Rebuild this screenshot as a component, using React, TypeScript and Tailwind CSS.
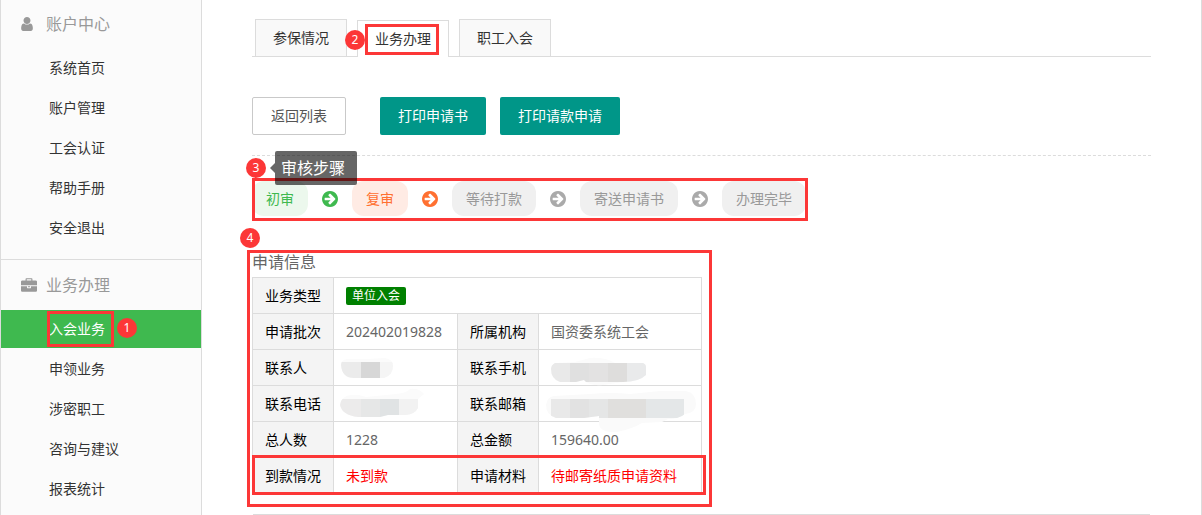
import React from 'react';
import clsx from 'clsx';

function UserIcon() {
  return (
    <svg viewBox="0 128 1280 1536" className="w-3 h-[14px]" fill="currentColor" aria-hidden="true">
      <path d="M1280 1399q0 109-62.5 187t-150.5 78h-854q-88 0-150.5-78t-62.5-187q0-85 8.5-160.5t31.5-152 58.5-131 94-89 134.5-34.5q131 128 313 128t313-128q76 0 134.5 34.5t94 89 58.5 131 31.5 152 8.5 160.5zm-256-887q0 159-112.5 271.5t-271.5 112.5-271.5-112.5-112.5-271.5 112.5-271.5 271.5-112.5 271.5 112.5 112.5 271.5z" />
    </svg>
  );
}

function BriefcaseIcon() {
  return (
    <svg viewBox="0 0 1792 1536" className="w-4 h-[14px]" fill="currentColor" aria-hidden="true">
      <path d="M640 256h512v-128h-512v128zm1152 640v480q0 66-47 113t-113 47h-1472q-66 0-113-47t-47-113v-480h672v160q0 26 19 45t45 19h320q26 0 45-19t19-45v-160h672zm-768 0v128h-256v-128h256zm768-480v384h-1792v-384q0-66 47-113t113-47h352v-160q0-40 28-68t68-28h576q40 0 68 28t28 68v160h352q66 0 113 47t47 113z" />
    </svg>
  );
}

function ArrowCircle({ className }: { className: string }) {
  return (
    <svg viewBox="128 128 1536 1536" className={clsx('w-4 h-4 shrink-0', className)} fill="currentColor" aria-hidden="true">
      <path d="M1413 896q0-27-18-45l-91-91-362-362q-18-18-45-18t-45 18l-91 91q-18 18-18 45t18 45l189 189h-502q-26 0-45 19t-19 45v128q0 26 19 45t45 19h502l-189 189q-19 19-19 45t19 45l91 91q18 18 45 18t45-18l362-362 91-91q18-18 18-45zm251 0q0 209-103 385.5t-279.5 279.5-385.5 103-385.5-103-279.5-279.5-103-385.5 103-385.5 279.5-279.5 385.5-103 385.5 103 279.5 279.5 103 385.5z" />
    </svg>
  );
}

// red outline drawn over a region of the page
function Outline({ className }: { className: string }) {
  return <span className={clsx('absolute border-3 border-[#fc3737] pointer-events-none', className)} />;
}

function Pin({ n, className }: { n: number; className: string }) {
  return (
    <span
      className={clsx(
        'absolute z-10 w-5 h-5 rounded-full bg-[#fc3737] text-white text-xs leading-5 text-center',
        className
      )}
    >
      {n}
    </span>
  );
}

const menus = [
  {
    title: '账户中心',
    icon: <UserIcon />,
    items: ['系统首页', '账户管理', '工会认证', '帮助手册', '安全退出'],
  },
  {
    title: '业务办理',
    icon: <BriefcaseIcon />,
    items: ['入会业务', '申领业务', '涉密职工', '咨询与建议', '报表统计'],
  },
];

function Sidebar() {
  return (
    <nav className="w-[202px] shrink-0 bg-[#fbfbfb] border-x border-[#dcdcdc]">
      {menus.map((menu, i) => (
        <section key={menu.title} className={i === 0 ? '-mt-px pb-2.5' : 'border-t border-[#dcdcdc]'}>
          <h2 className="flex items-center h-[50px] pl-5 text-base text-[#999]">
            <span className="w-[25px]">{menu.icon}</span>
            {menu.title}
          </h2>
          <ul>
            {menu.items.map((item) => {
              const active = item === '入会业务';
              return (
                <li key={item} className="relative mb-0.5">
                  <a
                    href="#"
                    className={clsx(
                      'block h-[38px] pl-12 leading-[38px]',
                      active ? 'bg-[#3fb94f] text-white' : 'text-[#333]'
                    )}
                  >
                    {item}
                  </a>
                  {active && (
                    <>
                      <Outline className="left-[46px] top-px w-[67px] h-9" />
                      <Pin n={1} className="left-[116px] top-2" />
                    </>
                  )}
                </li>
              );
            })}
          </ul>
        </section>
      ))}
    </nav>
  );
}

function Tabs() {
  return (
    <div className="flex items-end gap-2.5 pl-[3px] border-b border-[#dcdcdc]">
      {['参保情况', '业务办理', '职工入会'].map((tab) => {
        const active = tab === '业务办理';
        return (
          <div key={tab} className={clsx('relative', active && '-mb-px')}>
            <button
              className={clsx(
                'block h-[37px] px-[17px] border border-b-0 border-[#dcdcdc] text-[#333]',
                active ? 'bg-white' : 'bg-[#f9f9f9]'
              )}
            >
              {tab}
            </button>
            {active && (
              <>
                <Outline className="left-2 top-1 w-[74px] h-[31px]" />
                <Pin n={2} className="-left-3 top-2.5" />
              </>
            )}
          </div>
        );
      })}
    </div>
  );
}

const steps = [
  { name: '初审', pill: 'bg-[#ecf8ed] text-[#3fb94f]', arrow: 'text-[#3fb94f]' },
  { name: '复审', pill: 'bg-[#ffebe4] text-[#ff7031]', arrow: 'text-[#ff7031]' },
  { name: '等待打款', pill: 'bg-[#f0f0f0] text-[#999]', arrow: 'text-[#aaa]' },
  { name: '寄送申请书', pill: 'bg-[#f0f0f0] text-[#999]', arrow: 'text-[#aaa]' },
  { name: '办理完毕', pill: 'bg-[#f0f0f0] text-[#999]', arrow: '' },
];

function Steps() {
  return (
    <div className="relative w-fit mt-[25px]">
      <ol className="flex">
        {steps.map((step) => (
          <li key={step.name} className="flex items-center">
            <span className={clsx('h-[35px] px-3.5 rounded-xl leading-[35px]', step.pill)}>{step.name}</span>
            {step.arrow && <ArrowCircle className={clsx('mx-3.5', step.arrow)} />}
          </li>
        ))}
      </ol>
      <Outline className="left-0 -right-0.5 -top-[3px] -bottom-[5px]" />
      <Pin n={3} className="-left-1.5 -top-[23px]" />
      <div
        role="tooltip"
        className="absolute left-[23px] -top-[30px] h-[34px] pl-1.5 pr-3 rounded-xs bg-black/60 text-white text-base leading-[34px] whitespace-nowrap"
      >
        <span className="absolute -left-[5px] top-3 border-y-5 border-r-5 border-y-transparent border-r-black/60" />
        审核步骤
      </div>
    </div>
  );
}

const th = 'px-3 border border-[#dcdcdc] bg-[#f4f4f4] text-left font-normal text-black';
const td = 'px-3 border border-[#dcdcdc] text-[#666]';

// mosaic strokes over private values
function PersonMask() {
  return (
    <svg className="absolute -left-1.5 -top-3 w-[54px] h-6" viewBox="340 355 54 24" role="img" aria-label="已隐藏">
      <clipPath id="m1">
        <path d="M341 364q0-5 6-6h20l18-1q8 1 8 8 0 9-9 12h-30q-12 0-13-13z" />
      </clipPath>
      <g clipPath="url(#m1)">
        <path fill="#fbfbfb" d="M340 355h54v24h-54z" />
        <path fill="#ebebeb" d="M340 361h21v18h-21z" />
        <path fill="#d7d7d7" d="M361 361h19v18h-19z" />
        <path fill="#f5f5f5" d="M380 361h14v18h-14z" />
      </g>
    </svg>
  );
}

function PhoneMask() {
  return (
    <svg className="absolute -left-1.5 -top-4 w-[86px] h-[30px]" viewBox="340 388 86 30" role="img" aria-label="已隐藏">
      <clipPath id="m2">
        <path d="M340 405q1-9 11-10h8l7 2 30-3q11-1 14-5 9-1 14 5l-6 5v9q-3 6-12 7h-18l-8 2h-22q-16-2-18-12z" />
      </clipPath>
      <g clipPath="url(#m2)">
        <path fill="#fbfbfb" d="M340 388h86v30h-86z" />
        <path fill="#ecebeb" d="M340 399h21v19h-21z" />
        <path fill="#e6e7e7" d="M361 399h19v19h-19z" />
        <path fill="#e0e3e4" d="M380 399h19v19h-19z" />
        <path fill="#f2f2f2" d="M399 399h19v19h-19z" />
      </g>
    </svg>
  );
}

function MobileMask() {
  return (
    <svg className="absolute left-0 -top-3 w-24 h-[30px]" viewBox="551 354 96 30" role="img" aria-label="已隐藏">
      <clipPath id="m3">
        <path d="M551 367q0-4 4-6l20-1 15-4q15-1 25 5h28q3 1 3 4v8q-7 7-23 7l-20 3q-15 1-19-5l-8 2h-16q-9-3-9-13z" />
      </clipPath>
      <g clipPath="url(#m3)">
        <path fill="#fbfbfb" d="M551 354h96v30h-96z" />
        <path fill="#e9e9e9" d="M551 361h19v19h-19z" />
        <path fill="#e0e0e0" d="M570 361h19v19h-19z" />
        <path fill="#e3e2e2" d="M589 361h19v19h-19z" />
        <path fill="#dedddc" d="M608 361h19v19h-19z" />
        <path fill="#e9eaeb" d="M627 361h20v19h-20z" />
      </g>
    </svg>
  );
}

function MailMask() {
  return (
    <svg className="absolute -left-[5px] -top-[14px] w-[151px] h-[43px]" viewBox="546 390 151 43" role="img" aria-label="已隐藏">
      <clipPath id="m4">
        <path d="M546 405q1-8 8-9l36-2q22-2 40 0l30-3h26q10 2 10 13 0 9-11 10-6 5-17 5l-6 3-20 1q-10 6-25 9-18 1-18-9v-7l-15 2h-28q-10-3-10-13z" />
      </clipPath>
      <g clipPath="url(#m4)">
        <path fill="#fafafa" d="M546 390h151v43h-151z" />
        <path fill="#e9e9e9" d="M551 399h19v19h-19z" />
        <path fill="#e2e2e2" d="M570 399h19v19h-19z" />
        <path fill="#e5e6e6" d="M589 399h19v19h-19z" />
        <path fill="#e0dfdd" d="M608 399h38v19h-38z" />
        <path fill="#e4e7e8" d="M646 399h38v19h-38z" />
      </g>
    </svg>
  );
}

const rows: { label: string; value: React.ReactNode; red?: boolean }[][] = [
  [{ label: '申请批次', value: '202402019828' }, { label: '所属机构', value: '国资委系统工会' }],
  [{ label: '联系人', value: <PersonMask /> }, { label: '联系手机', value: <MobileMask /> }],
  [{ label: '联系电话', value: <PhoneMask /> }, { label: '联系邮箱', value: <MailMask /> }],
  [{ label: '总人数', value: '1228' }, { label: '总金额', value: '159640.00' }],
  [
    { label: '到款情况', value: '未到款', red: true },
    { label: '申请材料', value: '待邮寄纸质申请资料', red: true },
  ],
];

function ApplyInfo() {
  return (
    <section className="relative w-fit mt-[34px]">
      <h3 className="mb-[3px] text-base leading-6 text-[#666]">申请信息</h3>
      <div className="relative">
        <table className="table-fixed border-collapse w-[450px]">
          <colgroup>
            <col className="w-[81px]" />
            <col className="w-[124px]" />
            <col className="w-[81px]" />
            <col />
          </colgroup>
          <tbody>
            <tr className="h-9">
              <th scope="row" className={th}>业务类型</th>
              <td colSpan={3} className={td}>
                <span className="block w-fit h-[18px] px-1.5 rounded-xs bg-[#008000] text-white text-xs leading-[18px]">
                  单位入会
                </span>
              </td>
            </tr>
            {rows.map((row) => (
              <tr key={row[0].label} className="h-9">
                {row.map((cell) => (
                  <React.Fragment key={cell.label}>
                    <th scope="row" className={th}>{cell.label}</th>
                    <td className={td}>
                      <div className={clsx('relative whitespace-nowrap', cell.red && 'text-[#f00]')}>{cell.value}</div>
                    </td>
                  </React.Fragment>
                ))}
              </tr>
            ))}
          </tbody>
        </table>
        <Outline className="left-0 -right-1 -bottom-px h-10" />
      </div>
      <Outline className="-left-[5px] -right-[10px] top-0 -bottom-[13px]" />
      <Pin n={4} className="-left-3 -top-[22px]" />
    </section>
  );
}

export default function App() {
  return (
    <div className="flex min-h-screen bg-white border-r border-[#dcdcdc] text-sm font-['Noto_Sans','Noto_Sans_CJK_SC',sans-serif]">
      <Sidebar />
      <main className="flex-1 min-w-0 px-[50px] pt-[19px]">
        <Tabs />
        <div className="flex mt-10 pb-5 border-b border-dashed border-[#dcdcdc]">
          <button className="h-[38px] px-[18px] mr-[34px] rounded-xs border border-[#c9c9c9] text-[#555]">返回列表</button>
          <button className="h-[38px] px-[18px] mr-3.5 rounded-xs bg-[#009688] text-white">打印申请书</button>
          <button className="h-[38px] px-[18px] rounded-xs bg-[#009688] text-white">打印请款申请</button>
        </div>
        <Steps />
        <ApplyInfo />
        <div className="mt-5 mx-px border-t border-[#dcdcdc]" />
      </main>
    </div>
  );
}
